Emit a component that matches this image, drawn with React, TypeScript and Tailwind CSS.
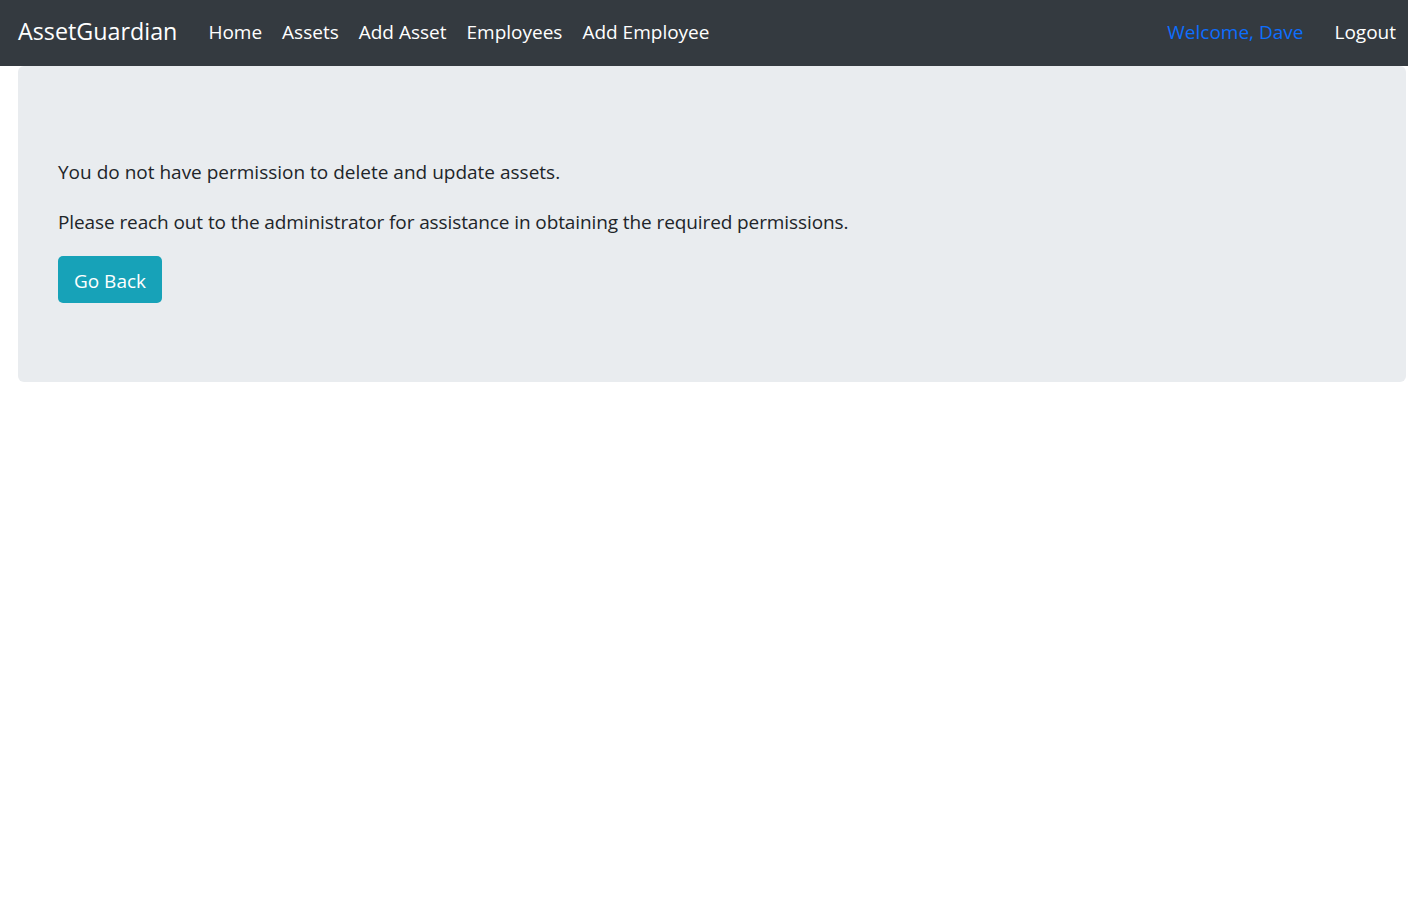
export default function App() {
  const font = { fontFamily: '"Open Sans", "Noto Sans", sans-serif' };
  return (
    <div className="min-h-[922px] bg-white text-[#212529]" style={font}>
      <nav className="h-[66px] bg-[#343a40] flex items-center pl-[18px] pr-[12px]">
        <span className="text-[23.3px] text-white mr-[31px] leading-none -mt-[2px]">AssetGuardian</span>
        <div className="flex items-center gap-[20px] text-[19px] text-white leading-none -mt-[2px]">
          <span>Home</span>
          <span>Assets</span>
          <span>Add Asset</span>
          <span>Employees</span>
          <span>Add Employee</span>
        </div>
        <div className="ml-auto flex items-center gap-[31px] text-[19px] leading-none -mt-[2px]">
          <span className="text-[#0d6efd]">Welcome, Dave</span>
          <span className="text-white">Logout</span>
        </div>
      </nav>
      <div className="ml-[18px] mr-[2px] bg-[#e9ecef] rounded-[6px] pt-[91px] pb-[79px] px-[40px]">
        <p className="text-[19px] leading-[30px] mb-[20px]">You do not have permission to delete and update assets.</p>
        <p className="text-[19px] leading-[30px] mb-[19px] tracking-[-0.1px]">Please reach out to the administrator for assistance in obtaining the required permissions.</p>
        <button className="h-[47px] w-[104px] bg-[#17a2b8] text-white text-[19px] rounded-[5px] flex items-center justify-center pt-[3px]">Go Back</button>
      </div>
    </div>
  );
}
